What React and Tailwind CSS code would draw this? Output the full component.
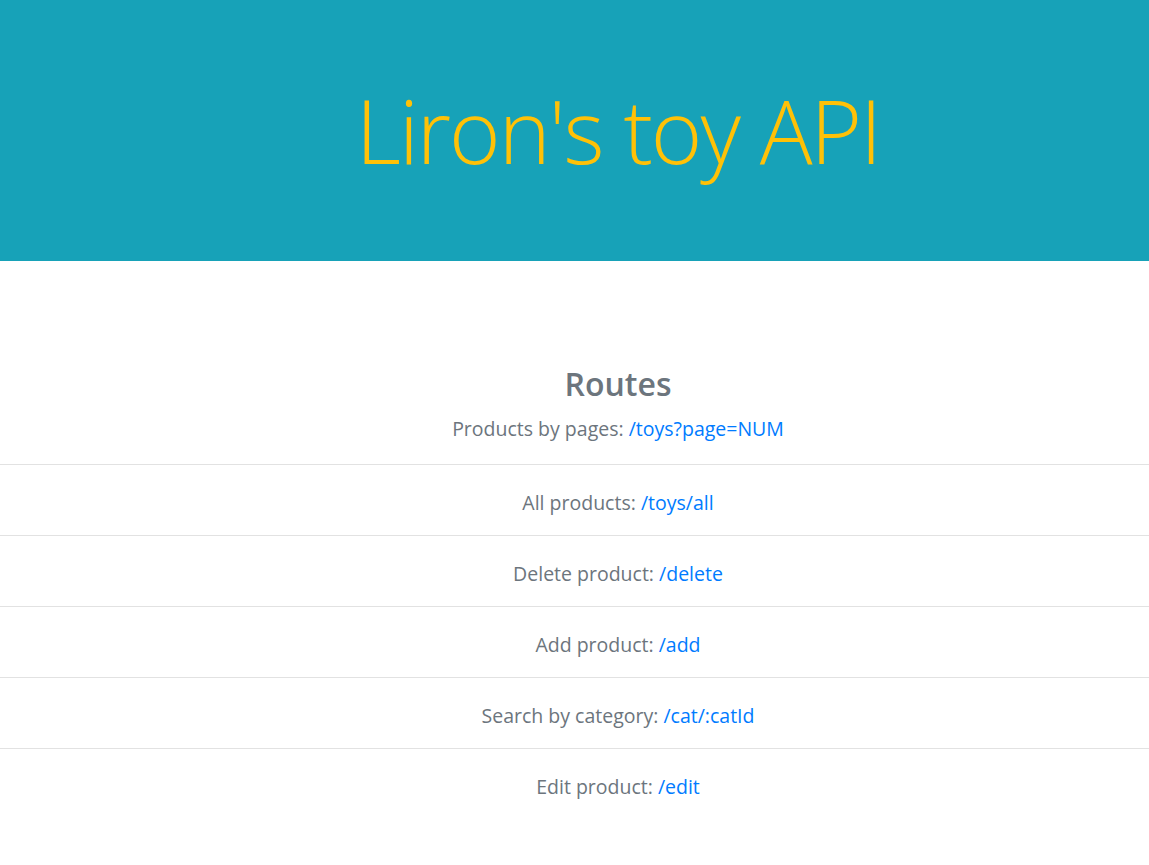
const routes = [
  { label: 'All products:', path: '/toys/all' },
  { label: 'Delete product:', path: '/delete' },
  { label: 'Add product:', path: '/add' },
  { label: 'Search by category:', path: '/cat/:catId' },
  { label: 'Edit product:', path: '/edit' },
]

export default function App() {
  return (
    <div className="min-h-screen bg-white font-['Open_Sans','Segoe_UI',sans-serif]">
      <header className="h-[261px] bg-[#17a2b8] flex items-center justify-center pl-[87px]">
        <h1 className="text-[88px] font-light leading-[1.2] tracking-[-2px] text-[#ffc107]">Liron's toy API</h1>
      </header>

      <main className="pt-[104px] text-[#6c757d]">
        <div className="pl-[87px] text-center">
          <h2 className="text-[32px] font-semibold leading-[1.2]">Routes</h2>
          <p className="mt-[12px] text-[19.5px] leading-[27px]">
            Products by pages: <a className="text-[#007bff]" href="#">/toys?page=NUM</a>
          </p>
        </div>

        <ul className="mt-[22px]">
          {routes.map(r => (
            <li key={r.path} className="h-[71px] border-t border-[#e2e2e2] flex items-center justify-center pt-1 pl-[87px] text-[19.5px]">
              <span>
                {r.label} <a className="text-[#007bff]" href="#">{r.path}</a>
              </span>
            </li>
          ))}
        </ul>
      </main>
    </div>
  )
}
